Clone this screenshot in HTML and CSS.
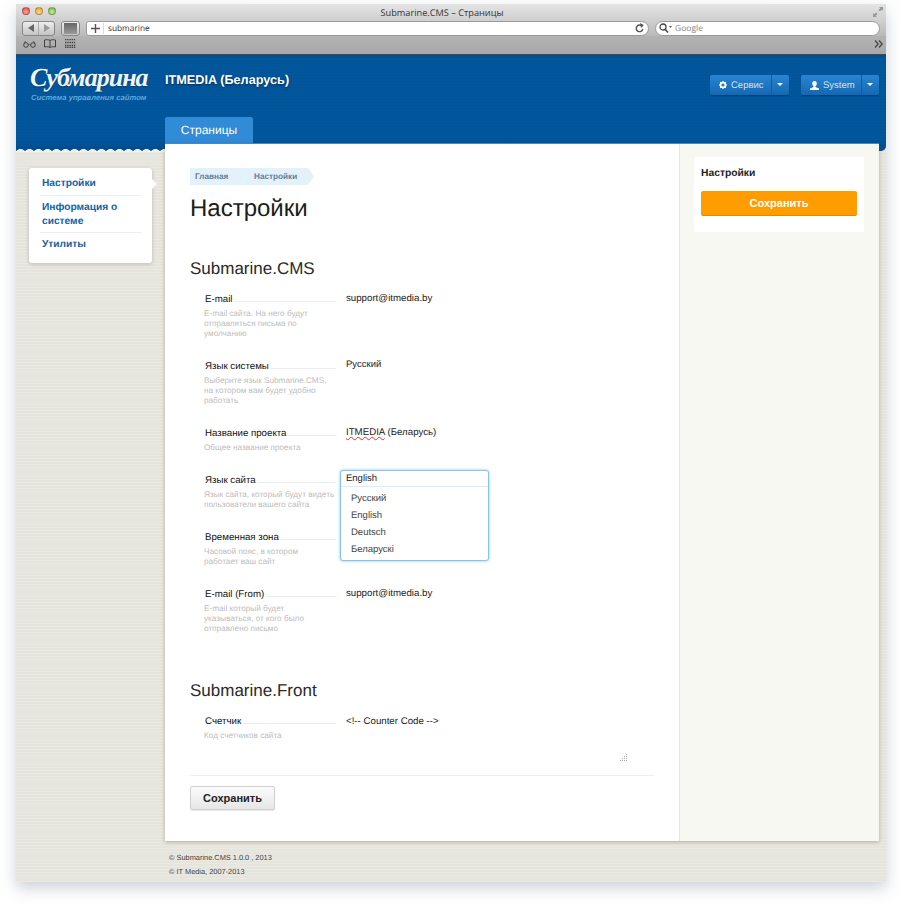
FILE: index.html
```html
<!DOCTYPE html>
<html lang="ru">
<head>
<meta charset="utf-8">
<title>Submarine.CMS – Страницы</title>
<link rel="stylesheet" href="styles.css">
</head>
<body>
<div class="window">
  <div class="chrome">
    <div class="titlebar">
      <div class="lights"><i class="light red"></i><i class="light yellow"></i><i class="light green"></i></div>
      <div class="title">Submarine.CMS – Страницы</div>
      <svg class="fullscreen" width="10" height="10" viewBox="0 0 10 10"><path d="M10 0H6l1.300 1.300L5.500 3.100l1.400 1.400 1.800-1.800L10 4zM0 10h4L2.700 8.700l1.800-1.800-1.400-1.400-1.800 1.800L0 6z" fill="#999"/></svg>
    </div>
    <div class="toolbar">
      <div class="nav-btns">
        <span class="nav-btn"><svg width="6" height="8" viewBox="0 0 6 8"><path d="M6 0v8L0 4z" fill="#666"/></svg></span>
        <span class="nav-btn"><svg width="6" height="8" viewBox="0 0 6 8"><path d="M0 0v8l6-4z" fill="#999"/></svg></span>
      </div>
      <div class="share-btn"><i></i></div>
      <div class="address">
        <svg class="plus" width="9" height="9" viewBox="0 0 9 9"><path d="M3.800 0h1.400v3.800H9v1.400H5.200V9H3.800V5.200H0V3.800h3.800z" fill="#555"/></svg>
        <span class="url">submarine</span>
        <svg class="reload" width="9" height="10" viewBox="0 0 9 10"><path d="M7.300 3.500A3.300 3.300 0 1 0 7.800 6" fill="none" stroke="#555" stroke-width="1.400"/><path d="M5 0l3.800 2-2.800 3z" fill="#555"/></svg>
      </div>
      <div class="search">
        <svg width="13" height="10" viewBox="0 0 13 10"><circle cx="4" cy="4" r="3" fill="none" stroke="#444" stroke-width="1.300"/><path d="M6 6l3 3.500" stroke="#444" stroke-width="1.500"/><path d="M10 3h3l-1.500 2z" fill="#555"/></svg>
        <span class="search-text">Google</span>
      </div>
    </div>
    <div class="bookmarks">
      <svg width="13" height="8" viewBox="0 0 13 8"><circle cx="3" cy="5" r="2.300" fill="none" stroke="#444"/><circle cx="10" cy="5" r="2.300" fill="none" stroke="#444"/><path d="M5 5q1.500-1 3 0M1 4l1.500-3M12 4l-1.500-3" fill="none" stroke="#444" stroke-width=".8"/></svg>
      <svg width="12" height="9" viewBox="0 0 12 9"><path d="M6 1.500C5 .6 2.500.5.500 1v7c2-.5 4.500-.4 5.500.5 1-.9 3.500-1 5.500-.5V1C9.500.5 7 .6 6 1.500zm0 0v7" fill="none" stroke="#444"/></svg>
      <svg width="11" height="9" viewBox="0 0 11 9"><path d="M0 .5h11M0 3.500h11M0 6.500h11M0 8.500h11" stroke="#444" stroke-width="1.400" stroke-dasharray="1.400 .8"/></svg>
      <svg class="more" width="9" height="8" viewBox="0 0 9 8"><path d="M1 .5L4.200 4 1 7.500M5 .5L8.200 4 5 7.500" fill="none" stroke="#444" stroke-width="1.200"/></svg>
    </div>
  </div>

  <header class="header">
    <div class="header-top">
      <div class="logo">
        <div class="logo-name">Субмарина</div>
        <div class="logo-sub">Система управления сайтом</div>
      </div>
      <div class="project">ITMEDIA (Беларусь)</div>
      <div class="actions">
        <div class="split-btn service">
          <span class="split-main"><svg width="8" height="8" viewBox="0 0 8 8"><circle cx="4" cy="4" r="2.400" fill="none" stroke="#fff" stroke-width="1.700"/><path d="M4 0v1.400M4 6.600V8M0 4h1.400M6.600 4H8M1.200 1.200l1 1M5.800 5.800l1 1M6.800 1.200l-1 1M2.200 5.800l-1 1" stroke="#fff" stroke-width="1.200"/></svg>Сервис</span>
          <span class="split-caret"></span>
        </div>
        <div class="split-btn user">
          <span class="split-main"><svg width="9" height="9" viewBox="0 0 9 9"><path d="M4.500 0C6 0 6.800 1 6.800 2.500S6 5 5.500 5.300v.7L9 7.500V9H0V7.500L3.500 6v-.7C3 5 2.200 4 2.200 2.500S3 0 4.500 0z" fill="#fff"/></svg>System</span>
          <span class="split-caret"></span>
        </div>
      </div>
    </div>
    <nav class="tabs"><a class="tab">Страницы</a></nav>
  </header>

  <div class="main">
    <aside class="sidebar">
      <div class="wave"></div>
      <ul class="side-menu">
        <li class="side-item current">Настройки</li>
        <li class="side-item">Информация о системе</li>
        <li class="side-item">Утилиты</li>
      </ul>
    </aside>

    <div class="content-col">
      <div class="card">
        <section class="content">
          <div class="crumbs"><span class="crumb first">Главная</span><span class="crumb second">Настройки</span></div>
          <h1 class="page-title">Настройки</h1>

          <div class="group">
            <h2 class="group-title">Submarine.CMS</h2>
            <div class="row">
              <div class="field-info"><div class="field-label"><span>E-mail</span></div><p class="hint">E-mail сайта. На него будут<br>отправляться письма по<br>умолчанию</p></div>
              <div class="value">support@itmedia.by</div>
            </div>
            <div class="row">
              <div class="field-info"><div class="field-label"><span>Язык системы</span></div><p class="hint">Выберите язык Submarine.CMS,<br>на котором вам будет удобно<br>работать</p></div>
              <div class="value small">Русский</div>
            </div>
            <div class="row">
              <div class="field-info"><div class="field-label"><span>Название проекта</span></div><p class="hint">Общее название проекта</p></div>
              <div class="value"><span class="misspelled">ITMEDIA</span> (Беларусь)</div>
            </div>
            <div class="row">
              <div class="field-info"><div class="field-label"><span>Язык сайта</span></div><p class="hint">Язык сайта, который будут видеть<br>пользователи вашего сайта</p></div>
              <div class="value small select-cell">
                <div class="select">
                  <div class="select-current">English</div>
                  <ul class="select-list">
                    <li>Русский</li><li>English</li><li>Deutsch</li><li>Беларускі</li>
                  </ul>
                </div>
              </div>
            </div>
            <div class="row">
              <div class="field-info"><div class="field-label"><span>Временная зона</span></div><p class="hint">Часовой пояс, в котором<br>работает ваш сайт</p></div>
              <div class="value"></div>
            </div>
            <div class="row">
              <div class="field-info"><div class="field-label"><span>E-mail (From)</span></div><p class="hint">E-mail который будет<br>указываться, от кого было<br>отправлено письмо</p></div>
              <div class="value">support@itmedia.by</div>
            </div>
          </div>

          <div class="group second-group">
            <h2 class="group-title">Submarine.Front</h2>
            <div class="row last">
              <div class="field-info"><div class="field-label"><span>Счетчик</span></div><p class="hint">Код счетчиков сайта</p></div>
              <div class="value code">
                <span>&lt;!-- Counter Code --&gt;</span>
                <svg class="grip" width="8" height="8" viewBox="0 0 8 8"><path d="M6 0h1v1H6zM6 2h1v1H6zM4 2h1v1H4zM6 4h1v1H6zM4 4h1v1H4zM2 4h1v1H2zM6 6h1v1H6zM4 6h1v1H4zM2 6h1v1H2zM0 6h1v1H0z" fill="#aaa"/></svg>
              </div>
            </div>
          </div>

          <div class="form-actions"><button class="save-btn">Сохранить</button></div>
        </section>
        <aside class="rail">
          <div class="rail-box">
            <div class="rail-title">Настройки</div>
            <button class="rail-save">Сохранить</button>
          </div>
        </aside>
      </div>
      <footer class="footer">
        <div>© Submarine.CMS 1.0.0 , 2013</div>
        <div>© IT Media, 2007-2013</div>
      </footer>
    </div>
  </div>
</div>
</body>
</html>
```

FILE: styles.css
```css
* { box-sizing: border-box; }
html, body { margin: 0; padding: 0; background: #fff; }
body { padding: 4px 0 0 16px; font-family: "Liberation Sans", Arial, sans-serif; color: #222; height: 912px; overflow: hidden; text-rendering: geometricPrecision; }
ul { list-style: none; margin: 0; padding: 0; }
p, h1, h2 { margin: 0; font-weight: normal; }

.window {
  width: 870px; height: 878px; position: relative;
  background-color: #e6e5dd;
  background-image: repeating-linear-gradient(0deg, rgba(255,255,255,.16) 0 1px, transparent 1px 3px);
  box-shadow: 0 6px 16px rgba(70,90,120,.28);
  border-radius: 3px 3px 0 0;
}

/* browser chrome */
.chrome { height: 51px; background: #aaa; border-radius: 3px 3px 0 0; }
.titlebar { height: 16px; display: flex; align-items: center; justify-content: center; position: relative; padding-right: 18px; background: linear-gradient(#e4e4e4, #d0d0d0); border-radius: 3px 3px 0 0; }
.lights { position: absolute; left: 6px; top: 3px; display: flex; gap: 5px; }
.light { width: 8px; height: 8px; border-radius: 50%; display: block; border: 1px solid rgba(0,0,0,.2); }
.red { background: radial-gradient(circle at 50% 70%, #f9a9a0, #d9433b); }
.yellow { background: radial-gradient(circle at 50% 70%, #fbdc8f, #d99a26); }
.green { background: radial-gradient(circle at 50% 70%, #c6ec9b, #6cb33f); }
.title { font: 9.200px "Open Sans", sans-serif; color: #333; padding-top: 1px; }
.fullscreen { position: absolute; right: 3px; top: 3px; }
.toolbar { height: 16px; display: flex; align-items: center; padding-left: 6px; background: linear-gradient(#d0d0d0, #b9b9b9); }
.nav-btns { width: 33px; height: 15px; flex: none; display: flex; border: 1px solid #888; border-radius: 3px; background: linear-gradient(#eee, #c4c4c4); }
.nav-btn { flex: 1; display: flex; align-items: center; justify-content: center; }
.nav-btn:first-child { border-right: 1px solid #aaa; }
.share-btn { width: 19px; height: 15px; flex: none; margin-left: 6px; padding: 1px 2px; border: 1px solid #888; border-radius: 3px; background: linear-gradient(#eee, #c4c4c4); }
.share-btn i { display: block; height: 100%; background: linear-gradient(#666, #999); }
.address { width: 563px; height: 15px; flex: none; margin-left: 6px; display: flex; align-items: center; padding: 0 4px 0 4px; background: #fff; border: 1px solid #9a9a9a; border-radius: 3px 8px 8px 3px; }
.plus { flex: none; }
.url { font: 8.300px "Open Sans", sans-serif; color: #333; margin-left: 3px; padding-left: 4px; border-left: 1px solid #ddd; line-height: 11px; flex: 1; }
.reload { flex: none; }
.search { width: 225px; height: 15px; flex: none; margin-left: 6px; display: flex; align-items: center; gap: 3px; padding-left: 3px; background: #fff; border: 1px solid #9a9a9a; border-radius: 8px; }
.search-text { font: 8.500px "Open Sans", sans-serif; color: #888; }
.bookmarks { height: 19px; display: flex; align-items: center; gap: 8px; padding: 0 3px 3px 7px; background: linear-gradient(#b3b3b3, #a8a8a8); border-bottom: 1px solid #4a4a4a; }
.bookmarks svg:nth-child(3) { margin-left: 1px; }
.more { margin-left: auto; }

/* header */
.header {
  height: 96px; display: flex; flex-direction: column;
  background-color: #01569c;
  background-image: repeating-linear-gradient(0deg, rgba(0,0,0,.025) 0 1px, transparent 1px 3px), linear-gradient(#004a86, #01569c 3px, #01569c 85px, #014c8e);
  border-radius: 0 0 5px 0;
}
.header-top { height: 62px; display: flex; align-items: flex-start; padding-right: 7px; }
.logo { width: 149px; flex: none; padding: 8px 0 0 14px; }
.logo-name { font: italic bold 26px/30px "Liberation Serif", serif; letter-spacing: -1px; color: #f2f4f6; white-space: nowrap; text-shadow: 0 1px 1px rgba(0,0,0,.3); }
.logo-sub { font: italic bold 7.700px/10px "Liberation Sans", sans-serif; color: #5ea6dc; white-space: nowrap; padding-left: 1px; }
.project { font-size: 12.700px; font-weight: bold; line-height: 16px; color: #fff; padding-top: 17px; text-shadow: 0 1px 2px rgba(0,0,0,.5); }
.actions { margin-left: auto; display: flex; gap: 12px; padding-top: 20px; }
.split-btn { height: 20px; display: flex; border-radius: 2px; background: linear-gradient(#2a85d0, #1468b3); box-shadow: 0 1px 1px rgba(0,0,0,.25); color: #cfe3f5; font-size: 9.500px; }
.service { width: 79px; }
.user { width: 78px; }
.split-main { flex: 1; display: flex; align-items: center; gap: 4px; padding-left: 9px; border-right: 1px solid #125d9f; }
.split-caret { width: 17px; position: relative; flex: none; }
.split-caret::after { content: ""; position: absolute; left: 5px; top: 8px; border: 3px solid transparent; border-top: 3px solid #fff; border-bottom: 0; }
.tabs { padding-left: 149px; height: 26px; display: flex; }
.tab { width: 88px; height: 26px; background: #318bd6; border-radius: 2px 2px 0 0; color: #fff; font-size: 12px; line-height: 26px; text-align: center; }

/* layout */
.main { display: flex; margin-top: -8px; }
.sidebar { width: 149px; flex: none; padding-top: 6px; }
.wave { height: 3px; margin-bottom: 16px; background-color: #01529a; background-image: radial-gradient(ellipse 4.800px 3px at 50% 100%, #f1f0ea 88%, rgba(241,240,234,0) 100%); background-size: 9px 3px; background-repeat: repeat-x; }
.side-menu { width: 123px; margin-left: 13px; padding: 0 11px; background: #fff; border-radius: 3px; box-shadow: 0 1px 4px rgba(0,0,0,.2); position: relative; }
.side-menu::after { content: ""; position: absolute; left: 100%; top: 11px; border: 5px solid transparent; border-left: 5px solid #fff; border-right: 0; }
.side-item { padding: 5px 0 3px 2px; font-size: 10.200px; font-weight: bold; line-height: 14px; color: #1560a5; border-bottom: 1px solid #eeeeea; }
.side-item:first-child { padding-top: 9px; padding-bottom: 4px; }
.side-item:last-child { border-bottom: 0; padding-bottom: 11px; }
.content-col { width: 714px; flex: none; }
.card { display: flex; border-top: 1px solid #3b8bd0; background: #fff; box-shadow: 0 1px 4px rgba(80,80,60,.4); }

/* content */
.content { width: 514px; flex: none; padding: 24px 25px 31px; }
.crumbs { display: flex; height: 17px; font-size: 8.200px; font-weight: bold; line-height: 17px; color: #627f99; }
.crumb { background: #e3f1fb; clip-path: polygon(0 0, calc(100% - 6px) 0, 100% 50%, calc(100% - 6px) 100%, 0 100%); }
.first { width: 56px; padding-left: 5px; }
.second { width: 74px; margin-left: -6px; padding-left: 14px; clip-path: polygon(0 0, calc(100% - 6px) 0, 100% 50%, calc(100% - 6px) 100%, 0 100%, 6px 50%); }
.page-title { margin-top: 10px; font-size: 24px; line-height: 28px; color: #1c1c1c; }
.group { margin-top: 36px; }
.second-group { margin-top: 47px; }
.group-title { font-size: 17px; line-height: 20px; color: #2a2a2a; margin-bottom: 14px; }
.row { display: flex; gap: 10px; margin: 0 0 21px 14px; }
.row.last { margin-bottom: 13px; }
.field-info { width: 132px; flex: none; }
.field-label { display: flex; align-items: flex-start; gap: 2px; height: 14px; font-size: 9.700px; line-height: 14px; color: #111; padding-left: 1px; }
.field-label span { white-space: nowrap; }
.field-label::after { content: ""; flex: 1; height: 1px; margin-top: 8px; background: #ececec; }
.hint { margin-top: 2px; font-size: 8.200px; line-height: 10px; color: #bdbdbd; white-space: nowrap; }
.value { flex: 1; font-size: 9.700px; line-height: 11px; color: #1c1c1c; }
.value.small { font-size: 9.500px; line-height: 9px; }
.misspelled { text-decoration: underline wavy #d33; text-decoration-thickness: 1px; }
.code { display: flex; flex-direction: column; justify-content: space-between; height: 47px; max-width: 282px; line-height: 14px; }
.grip { align-self: flex-end; }
.select-cell { position: relative; }
.select { position: absolute; left: -6px; top: -4px; width: 149px; height: 91px; background: #fff; border: 1px solid #88c2ee; border-radius: 3px; box-shadow: 0 0 3px rgba(90,170,235,.7); z-index: 2; }
.select-current { height: 16px; padding-left: 5px; line-height: 16px; border-bottom: 1px solid #dcecf8; }
.select-list { padding-top: 3px; padding-left: 10px; }
.select-list li { height: 17px; line-height: 17px; color: #444; }
.form-actions { border-top: 1px solid #efefef; padding-top: 10px; }
.save-btn { display: block; width: 85px; height: 24px; padding: 0; font: bold 11px "Liberation Sans", sans-serif; color: #222; background: linear-gradient(#fbfbfb, #e6e6e6); border: 1px solid #d0d0d0; border-radius: 2px; box-shadow: 0 1px 1px rgba(0,0,0,.1); }

/* right rail */
.rail { flex: 1; background: #f8f8f3; border-left: 1px solid #e8e8e2; padding: 13px 15px 0 14px; }
.rail-box { height: 75px; background: #fff; padding: 10px 7px 0; }
.rail-title { font-size: 10.300px; font-weight: bold; line-height: 14px; color: #222; }
.rail-save { display: block; width: 156px; height: 24px; margin-top: 10px; padding: 0; font: bold 11px "Liberation Sans", sans-serif; color: #fff; background: #ff9c00; border: 0; border-radius: 2px; box-shadow: 0 1px 0 #d98a10; }

/* footer */
.footer { padding: 10px 0 0 4px; font: 7.400px/14px "Liberation Sans", sans-serif; color: #444; }
```
